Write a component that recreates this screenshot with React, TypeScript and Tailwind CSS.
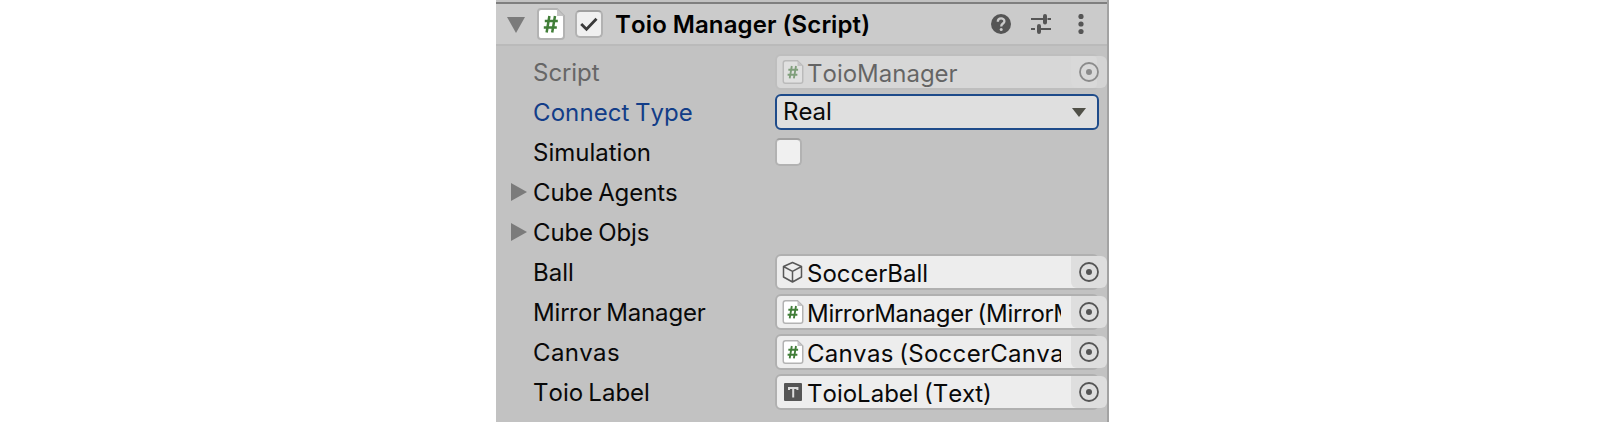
import React from "react";

function ScriptIcon({ className }: { className: string }) {
  return (
    <svg viewBox="0 0 28 32" className={className} fill="none">
      <path d="M4 1H20L27 8V28Q27 31 24 31H4Q1 31 1 28V4Q1 1 4 1Z" fill="#fff" stroke="#b3b3b3" strokeWidth="2" />
      <path d="M20 1V8H27Z" fill="#c4c4c4" />
      <path d="M12.4 8L9.6 24.5M18 8L15.2 24.5M7.8 13H20.8M6.8 19.6H19.8" stroke="#417e38" strokeWidth="2.5" />
    </svg>
  );
}

function CubeIcon() {
  return (
    <svg viewBox="0 0 22 24" className="h-6 w-[22px]" fill="none" stroke="#585858" strokeWidth="1.5" strokeLinejoin="round">
      <path d="M10.5 2.5L19.5 6.5V17L10.5 22L1.5 17V6.5ZM1.5 6.5L10.5 11.3L19.5 6.5M10.5 11.3V22" />
    </svg>
  );
}

function TextIcon() {
  return (
    <svg viewBox="0 0 22 24" className="h-6 w-[22px]">
      <rect x="2" y="3" width="18" height="18" rx="1" fill="#555" />
      <path d="M7 10V8H15.4V10M11.2 8V17.6" fill="none" stroke="#ddd" strokeWidth="2" />
    </svg>
  );
}

type Kind = "script" | "cube" | "text";

function ObjectField({ kind, text, tracking = "", disabled = false }: {
  kind: Kind;
  text: string;
  tracking?: string;
  disabled?: boolean;
}) {
  return (
    <div className={disabled ? "relative h-9 w-[332px] opacity-50" : "relative h-9 w-[332px]"}>
      <div
        className={
          disabled
            ? "flex h-9 w-[324px] items-center rounded-md border-2 border-[#bcbcbc] bg-[#ededed] pl-[5px]"
            : "flex h-9 w-[324px] items-center rounded-md border-2 border-[#b0b0b0] bg-[#ededed] pl-[5px]"
        }
      >
        {kind === "script" && <ScriptIcon className="h-6 w-[22px] shrink-0" />}
        {kind === "cube" && <CubeIcon />}
        {kind === "text" && <TextIcon />}
        <span className={`ml-[3px] w-[254px] overflow-hidden whitespace-nowrap pt-1 leading-[34px] ${tracking}`}>{text}</span>
      </div>
      <div
        className={
          disabled
            ? "absolute right-0 top-0.5 flex h-8 w-9 items-center justify-center rounded-r-md rounded-bl-md bg-[#f0f0f0]/80"
            : "absolute right-0 top-0.5 flex h-8 w-9 items-center justify-center rounded-r-md rounded-bl-md bg-[#dedede]"
        }
      >
        <svg viewBox="0 0 20 20" className="h-5 w-5">
          <circle cx="10" cy="10" r="9" fill="none" stroke="#555" strokeWidth="1.8" />
          <circle cx="10" cy="10" r="3" fill="#555" />
        </svg>
      </div>
    </div>
  );
}

function Row({ label, tone = "text-[#090909]", foldout = false, children }: {
  label: string;
  tone?: string;
  foldout?: boolean;
  children?: React.ReactNode;
}) {
  return (
    <div className="flex h-9">
      <div className="flex w-[37px] items-center pl-[15px]">
        {foldout && (
          <svg viewBox="0 0 16 18" className="h-[18px] w-4">
            <path d="M0 0L16 9L0 18Z" fill="#7b7b7b" />
          </svg>
        )}
      </div>
      <div className={`w-[242px] whitespace-nowrap leading-[38px] ${tone}`}>{label}</div>
      {children}
    </div>
  );
}

export default function App() {
  return (
    <div className="flex h-[422px] justify-center overflow-hidden bg-white pl-[5px] font-['Inter',sans-serif] text-[24px] text-[#090909] [font-kerning:none] [word-spacing:-1.5px]">
      <section className="h-full w-[613px] border-r-2 border-[#a3a3a3] bg-[#c2c2c2] pt-0.5">
        <header className="flex h-11 items-center border-b-2 border-t-2 border-b-[#bababa] border-t-[#7f7f7f] bg-[#cbcbcb] pl-[11px]">
          <svg viewBox="0 0 18 16" className="mt-0.5 h-4 w-[18px]">
            <path d="M0 0H18L9 16Z" fill="#7b7b7b" />
          </svg>
          <ScriptIcon className="ml-3 h-8 w-7" />
          <div className="ml-[10px] flex h-7 w-7 items-center justify-center rounded-[5px] border-2 border-[#b2b2b2] border-t-[#a0a0a0] bg-[#f0f0f0]">
            <svg viewBox="0 0 20 16" className="h-4 w-5" fill="none">
              <path d="M2.2 8L7.5 13.2L17.5 2.8" stroke="#3a3a3a" strokeWidth="2.8" />
            </svg>
          </div>
          <h1 className="ml-3 whitespace-nowrap pt-0.5 font-semibold tracking-[0.13px] text-black [word-spacing:-0.4px]">
            Toio Manager (Script)
          </h1>
          <div className="ml-auto flex items-center gap-5 pr-4">
            <svg viewBox="0 0 20 20" className="h-5 w-5" fill="none">
              <circle cx="10" cy="10" r="10" fill="#555" />
              <path d="M6.8 7.7C6.8 3.2 13.4 3.4 13.4 7.2C13.4 9.6 10.2 9.5 10.2 12.5" stroke="#cbcbcb" strokeWidth="2.3" />
              <circle cx="10.2" cy="15.6" r="1.5" fill="#cbcbcb" />
            </svg>
            <svg viewBox="0 0 20 20" className="h-5 w-5" fill="none" stroke="#555">
              <path d="M0 5H14M16.5 5H20M0 15H4M8 15H20" strokeWidth="2" />
              <path d="M14 2V8.5M8 12V18" strokeWidth="4" strokeLinecap="round" />
            </svg>
            <svg viewBox="0 0 20 20" className="h-5 w-5" fill="#555">
              <circle cx="10" cy="2.5" r="2.6" />
              <circle cx="10" cy="10" r="2.6" />
              <circle cx="10" cy="17.5" r="2.6" />
            </svg>
          </div>
        </header>
        <div className="flex flex-col gap-1 pt-2">
          <Row label="Script" tone="text-[#666]">
            <ObjectField kind="script" text="ToioManager" disabled />
          </Row>
          <Row label="Connect Type" tone="text-[#123d88] tracking-[0.1px]">
            <div className="flex h-9 w-[324px] items-center justify-between rounded-md border-2 border-[#1e4b8a] bg-[#dfdfdf] pl-1.5 pr-[11px] leading-8">
              <span>Real</span>
              <svg viewBox="0 0 14 9" className="h-[9px] w-[14px]">
                <path d="M0 0H14L7 9Z" fill="#505048" />
              </svg>
            </div>
          </Row>
          <Row label="Simulation">
            <div className="mt-1 h-7 w-[27px] rounded-[5px] border-2 border-[#b2b2b2] border-t-[#a0a0a0] bg-[#f0f0f0]" />
          </Row>
          <Row label="Cube Agents" tone="text-[#090909] tracking-[-0.1px]" foldout />
          <Row label="Cube Objs" tone="text-[#090909] tracking-[-0.1px]" foldout />
          <Row label="Ball">
            <ObjectField kind="cube" text="SoccerBall" />
          </Row>
          <Row label="Mirror Manager" tone="text-[#090909] tracking-[-0.15px]">
            <ObjectField kind="script" text="MirrorManager (MirrorManager)" tracking="tracking-[-0.3px]" />
          </Row>
          <Row label="Canvas" tone="text-[#090909] tracking-[0.35px]">
            <ObjectField kind="script" text="Canvas (SoccerCanvas)" tracking="tracking-[0.3px]" />
          </Row>
          <Row label="Toio Label">
            <ObjectField kind="text" text="ToioLabel (Text)" />
          </Row>
        </div>
      </section>
    </div>
  );
}
